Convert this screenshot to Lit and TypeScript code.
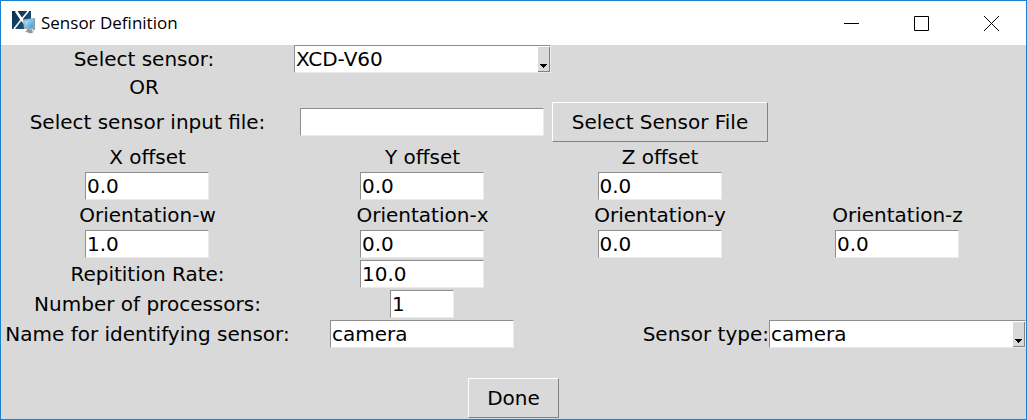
import { LitElement, html, css, svg } from "lit";
import { customElement, state } from "lit/decorators.js";

interface Field {
  id: string;
  label: string;
  value: string;
}

const offsets: Field[] = [
  { id: "offset-x", label: "X offset", value: "0.0" },
  { id: "offset-y", label: "Y offset", value: "0.0" },
  { id: "offset-z", label: "Z offset", value: "0.0" },
];

const orientations: Field[] = [
  { id: "orientation-w", label: "Orientation-w", value: "1.0" },
  { id: "orientation-x", label: "Orientation-x", value: "0.0" },
  { id: "orientation-y", label: "Orientation-y", value: "0.0" },
  { id: "orientation-z", label: "Orientation-z", value: "0.0" },
];

const logo = svg`
  <defs>
    <linearGradient id="tile" x1="0" y1="0" x2="1" y2="1">
      <stop offset="0" stop-color="#0a2c48" />
      <stop offset="1" stop-color="#1f5c86" />
    </linearGradient>
    <linearGradient id="screen" x1="0" y1="0" x2="1" y2="1">
      <stop offset="0" stop-color="#bfeaff" />
      <stop offset="1" stop-color="#2f9be0" />
    </linearGradient>
  </defs>
  <rect x="0" y="0" width="19" height="18" fill="url(#tile)" />
  <path d="M4 0 L10 9 L17 17" stroke="#fff" stroke-width="2.600" fill="none" />
  <path d="M16.500 0 L9 9 L2 18" stroke="#fff" stroke-width="1.600" fill="none" />
  <path d="M21 8 L23 7 V18 L21 20 Z" fill="#6f7a83" />
  <path d="M11 8.500 L22.500 7 V18.500 L12 18 Z" fill="#a3adb5" />
  <path d="M12.500 10 L21 8.700 V17 L13.200 16.600 Z" fill="url(#screen)" />
  <path d="M15 18 L20 18.500 L20 20 L22 21 L18.500 22.500 L13 20.500 L15 19.500 Z" fill="#92999f" />
`;

@customElement("app-root")
export class AppRoot extends LitElement {
  static styles = css`
    :host {
      display: block;
      font-family: "DejaVu Sans", sans-serif;
      font-size: 20px;
      line-height: 24px;
      color: #000;
    }

    .window {
      box-sizing: border-box;
      min-height: 100vh;
      border: 1px solid #1a80d2;
      background: #d9d9d9;
    }

    .titlebar {
      display: flex;
      align-items: center;
      height: 44px;
      padding-left: 11px;
      background: #fff;
    }

    .logo {
      width: 24px;
      height: 24px;
      margin-right: 5px;
    }

    .title {
      flex: 1;
      margin: 0;
      font: 400 17px/24px "Open Sans", sans-serif;
    }

    .caption {
      display: grid;
      place-items: center;
      width: 70px;
      height: 44px;
      padding: 0;
      border: 0;
      background: none;
    }

    .glyph {
      width: 15px;
      height: 15px;
      fill: none;
      stroke: #000;
    }

    .form {
      display: grid;
      grid-template-columns: 293fr 257fr 218fr 257fr;
      grid-auto-rows: minmax(28px, auto);
      place-items: center;
      white-space: nowrap;
    }

    .first {
      grid-column: 1;
    }

    .choice {
      padding-right: 7px;
    }

    .end {
      grid-column: 3;
      justify-self: end;
    }

    .entry,
    .combo {
      box-sizing: border-box;
      height: 28px;
      border: 1px solid;
      border-color: #8f8f8f #ebebeb #ebebeb #8f8f8f;
      background: #fff;
    }

    .entry,
    .select,
    .button {
      font: inherit;
      color: inherit;
      border-radius: 0;
    }

    .entry {
      width: 124px;
      margin: 1px 1px 1px 0;
      padding: 0 1px;
    }

    .entry.tiny {
      width: 64px;
    }

    .entry.medium {
      width: 184px;
    }

    .entry.wide {
      width: 244px;
    }

    .combo {
      position: relative;
      justify-self: stretch;
    }

    .select {
      display: block;
      width: 100%;
      height: 26px;
      padding: 0 14px 0 1px;
      border: 0;
      background: none;
      appearance: none;
    }

    .arrow {
      position: absolute;
      top: 1px;
      right: 0;
      width: 12px;
      height: 25px;
      box-sizing: border-box;
      border: solid #828282;
      border-width: 0 1px 1px 0;
      background: #d9d9d9;
      pointer-events: none;
    }

    .button {
      box-sizing: border-box;
      justify-self: stretch;
      height: 40px;
      margin: 1px;
      padding: 0 18px;
      border: 1px solid;
      border-color: #fff #828282 #828282 #fff;
      background: #d9d9d9;
    }

    .footer {
      grid-column: 1 / -1;
      padding-top: 28px;
    }

    .footer .button {
      display: block;
    }
  `;

  @state() private sensor = "XCD-V60";
  @state() private sensorType = "camera";

  private combo(id: string, value: string, onChange: (v: string) => void) {
    return html`
      <div class="combo">
        <select
          class="select"
          id=${id}
          @change=${(e: Event) => onChange((e.target as HTMLSelectElement).value)}
        >
          <option selected>${value}</option>
        </select>
        <svg class="arrow" viewBox="0 0 11 24" aria-hidden="true">
          <path d="M2 17 H9 V18 H8 V19 H7 V20 H6 V21 H5 V20 H4 V19 H3 V18 H2 Z" />
        </svg>
      </div>
    `;
  }

  private group(fields: Field[]) {
    return html`
      ${fields.map(
        (f, i) => html`<label class=${i ? "" : "first"} for=${f.id}>${f.label}</label>`
      )}
      ${fields.map(
        (f, i) => html`<input class="entry ${i ? "" : "first"}" id=${f.id} .value=${f.value} />`
      )}
    `;
  }

  render() {
    return html`
      <main class="window">
        <header class="titlebar">
          <svg class="logo" viewBox="0 0 24 24" aria-hidden="true">${logo}</svg>
          <h1 class="title">Sensor Definition</h1>
          <button class="caption" aria-label="Minimize">
            <svg class="glyph" viewBox="0 0 15 15"><path d="M0 7.500 H15" /></svg>
          </button>
          <button class="caption" aria-label="Maximize">
            <svg class="glyph" viewBox="0 0 15 15"><path d="M0.500 0.500 H14.500 V14.500 H0.500 Z" /></svg>
          </button>
          <button class="caption" aria-label="Close">
            <svg class="glyph" viewBox="0 0 15 15"><path d="M0 0 L15 15 M15 0 L0 15" /></svg>
          </button>
        </header>
        <form class="form" @submit=${(e: Event) => e.preventDefault()}>
          <label class="first choice" for="sensor">Select sensor:</label>
          ${this.combo("sensor", this.sensor, (v) => (this.sensor = v))}

          <span class="first choice">OR</span>

          <label class="first" for="file">Select sensor input file:</label>
          <input class="entry wide" id="file" />
          <button class="button" type="button">Select Sensor File</button>

          ${this.group(offsets)} ${this.group(orientations)}

          <label class="first" for="rate">Repitition Rate:</label>
          <input class="entry" id="rate" .value=${"10.0"} />

          <label class="first" for="processors">Number of processors:</label>
          <input class="entry tiny" id="processors" .value=${"1"} />

          <label class="first" for="name">Name for identifying sensor:</label>
          <input class="entry medium" id="name" .value=${"camera"} />
          <label class="end" for="type">Sensor type:</label>
          ${this.combo("type", this.sensorType, (v) => (this.sensorType = v))}

          <div class="footer">
            <button class="button" type="submit">Done</button>
          </div>
        </form>
      </main>
    `;
  }
}
